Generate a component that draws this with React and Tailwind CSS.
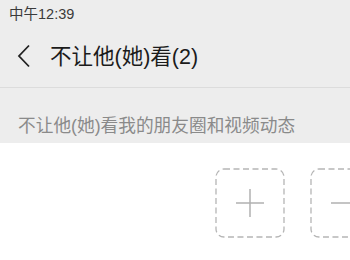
export default function App() {
  const font = { fontFamily: '"Liberation Sans", "Noto Sans CJK SC", sans-serif' };

  const DashedBox = ({ minus }) => (
    <div className="w-[70px] h-[70px] shrink-0">
      <svg width="70" height="70" viewBox="0 0 70 70">
        <rect
          x="1"
          y="1"
          width="68"
          height="68"
          rx="8"
          fill="none"
          stroke="#b5b5b5"
          strokeWidth="1.3"
          strokeDasharray="6 3.5"
        />
        <line x1="21" y1="35" x2="49" y2="35" stroke="#b0b0b0" strokeWidth="1.5" />
        {!minus && <line x1="35" y1="21" x2="35" y2="49" stroke="#b0b0b0" strokeWidth="1.5" />}
      </svg>
    </div>
  );

  return (
    <div className="w-[350px] h-[260px] overflow-hidden bg-white" style={font}>
      <div className="bg-[#ededed]">
        {/* status bar */}
        <div className="h-[28px] flex items-center pl-[9px] pt-[1px] text-[14.5px] text-[#3a3a3a]">
          中午12:39
        </div>

        {/* header */}
        <div className="h-[60px] flex items-center border-b border-[#dcdcdc]">
          <svg width="40" height="24" viewBox="0 0 40 24" className="ml-[8px] mb-[4px]">
            <polyline
              points="21,1.5 11,12 21,22.5"
              fill="none"
              stroke="#222"
              strokeWidth="1.8"
            />
          </svg>
          <span className="ml-[2px] text-[21.5px] text-[#1b1b1b]">不让他(她)看(2)</span>
        </div>

        {/* hint */}
        <div className="h-[55px] flex items-end pb-[4px] pl-[18px] text-[17.7px] leading-[26px] text-[#8a8a8a]">
          不让他(她)看我的朋友圈和视频动态
        </div>
      </div>

      {/* members */}
      <div className="flex gap-[25px] pt-[25px] pl-[215px]">
        <DashedBox />
        <DashedBox minus />
      </div>
    </div>
  );
}
